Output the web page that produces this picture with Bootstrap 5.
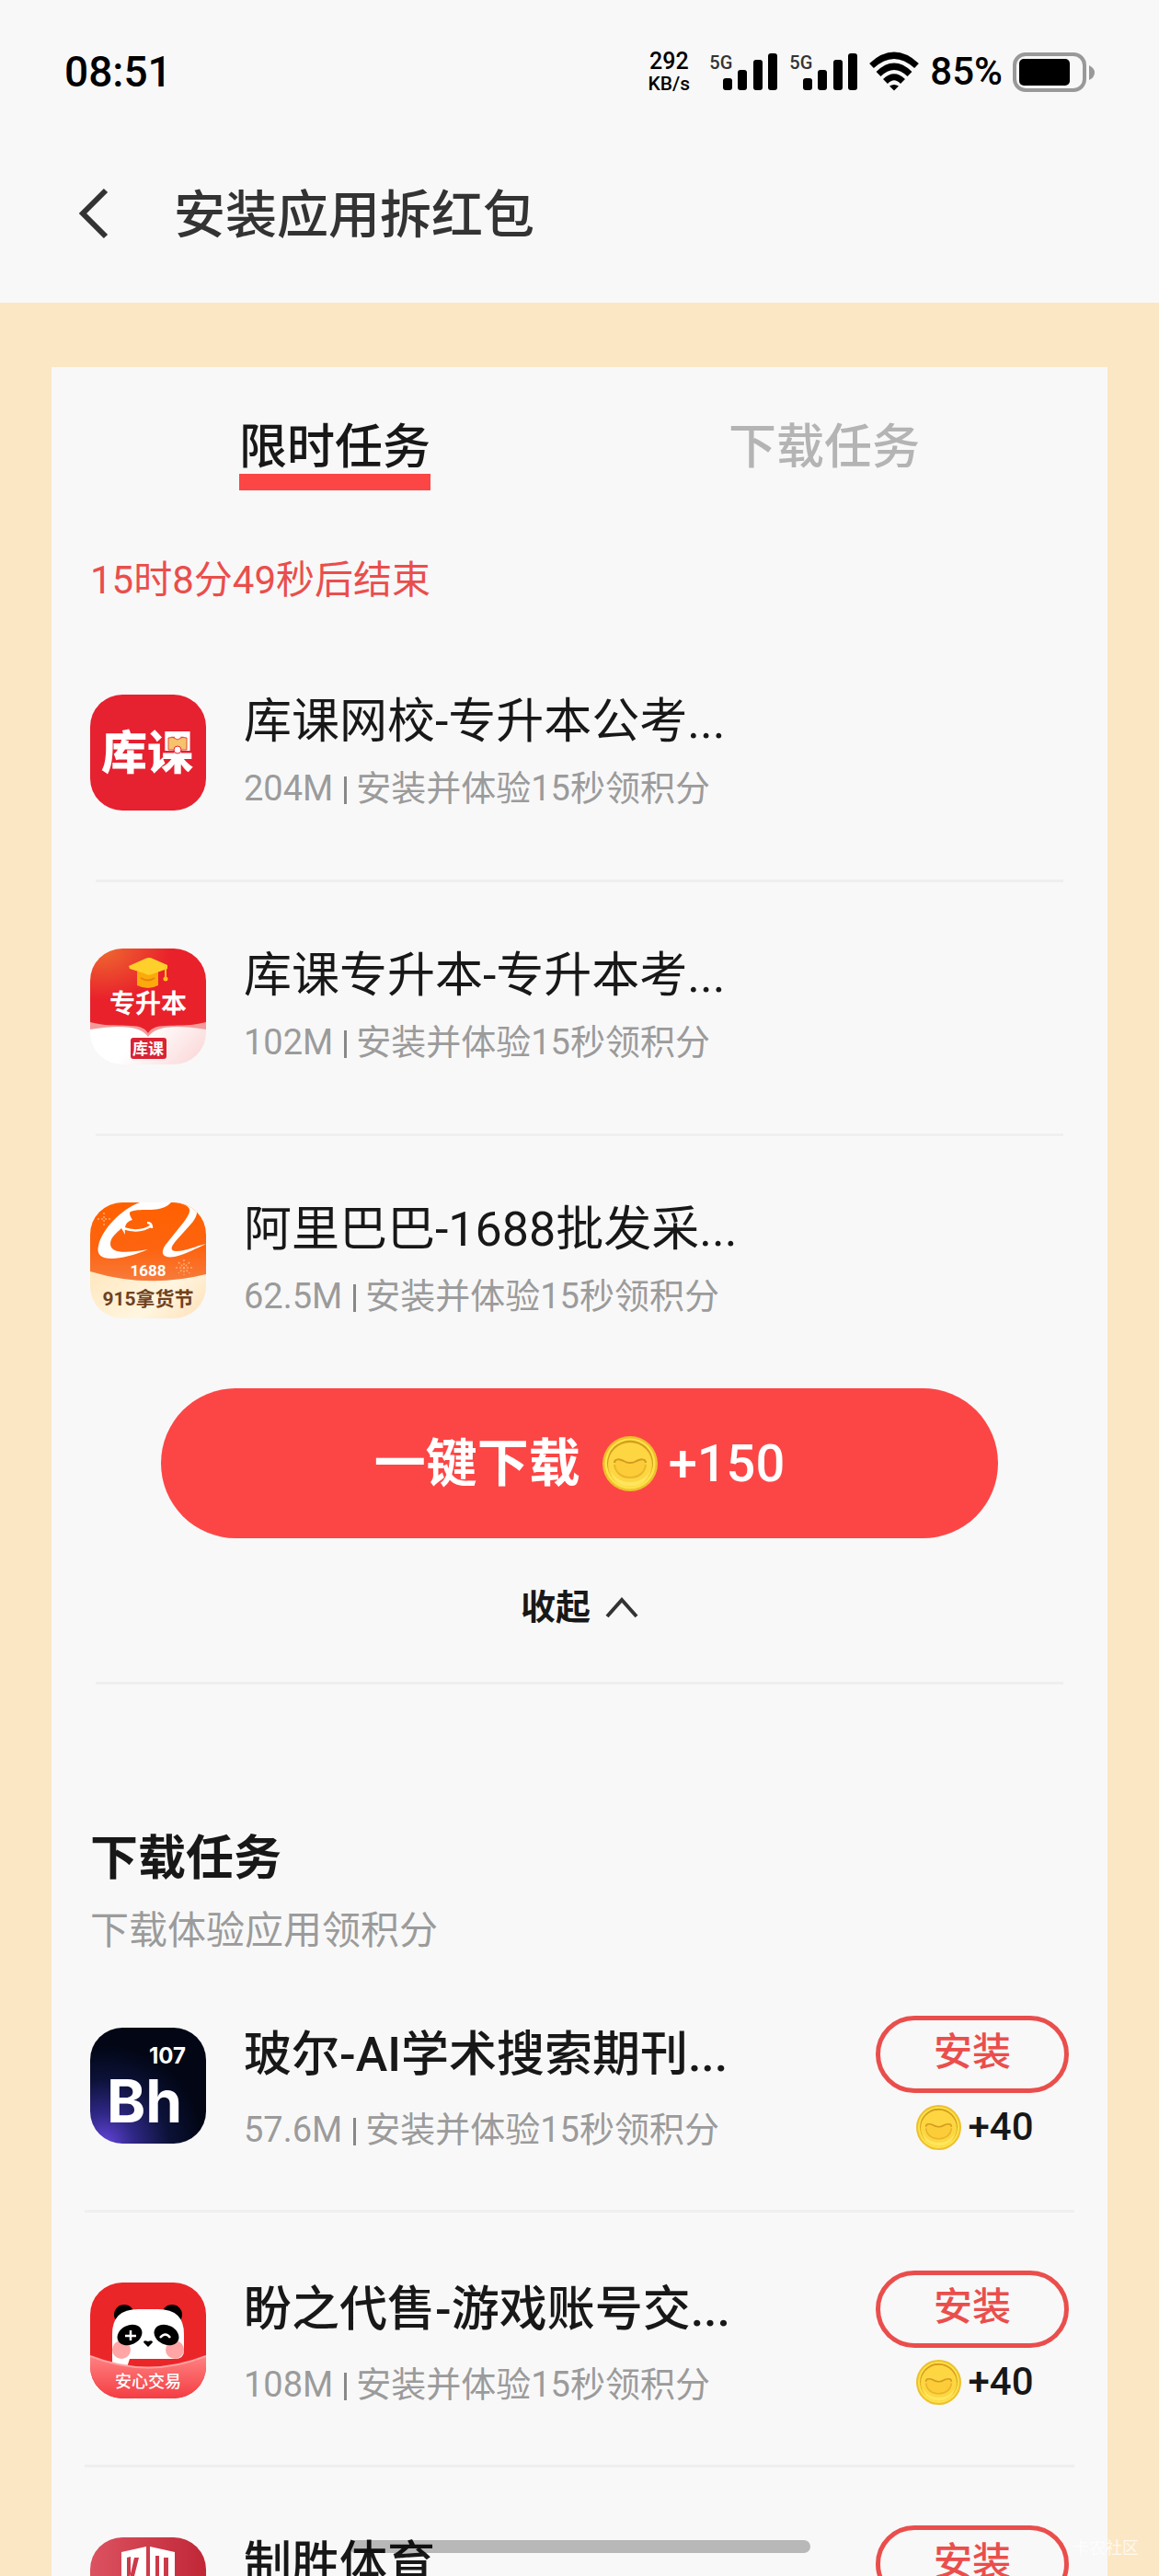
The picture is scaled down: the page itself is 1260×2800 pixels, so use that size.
<!DOCTYPE html>
<html lang="zh-CN">
<head>
<meta charset="utf-8">
<meta name="viewport" content="width=device-width, initial-scale=1">
<title>安装应用拆红包</title>
<link href="https://cdn.jsdelivr.net/npm/bootstrap@5.3.0/dist/css/bootstrap.min.css" rel="stylesheet">
<style>
  :root { --paper: #f8f8f8; --sand: #fce7c4; --ink: #181818; --red: #fc4646; --rose: #ea4e4c; --muted: #9b9b9b; }
  body { background: var(--sand); color: var(--ink); font-family: Roboto, "Noto Sans CJK SC", sans-serif; }
  .screen { height: 100vh; overflow: hidden; }
  svg { display: block; flex: none; overflow: visible; }
  .topbar { background: var(--paper); height: 329px; padding: 34px 70px 0; }
  .status { height: 88px; color: #000; font-weight: 500; }
  .clock { font-size: 46px; line-height: 56px; }
  .netrate { font-size: 25px; line-height: 24px; width: 50px; padding-top: 2px; }
  .netrate small { font-size: 21px; line-height: 24px; }
  .netgen { font-size: 20px; line-height: 20px; color: #333; margin-right: -10px; }
  .percent { font-size: 42px; line-height: 56px; }
  .titlebar { height: 120px; margin-top: 52px; gap: 68px; padding-left: 14px; }
  .backlink { margin-bottom: 4px; }
  .pagetitle { font-size: 56px; line-height: 80px; font-weight: 500; color: #333; }
  .sheet { background: var(--paper); margin: 70px 56px 0; padding: 44px 42px 0; }
  .tabs .tablink { font-size: 52px; line-height: 72px; height: 90px; border: 0; border-bottom: 18px solid transparent; padding: 8px 0 0; background: none; color: #b4b4b4; font-weight: 500; }
  .tabs .tablink.active { color: var(--ink); border-color: var(--red); }
  .countdown { font-size: 42px; line-height: 60px; margin-top: 68px; color: var(--rose); }
  .applist { margin: 94px 0 0; }
  .approw { gap: 41px; }
  .rule { border-top: 3px solid #efefef; margin: 0 6px; }
  .applist .approw { height: 201px; }
  .applist .rule + .approw { height: 273px; padding-top: 72px; }
  .appname { font-size: 52px; line-height: 60px; }
  .appmeta { font-size: 38px; line-height: 50px; color: var(--muted); margin-top: 17px; }
  .metabar { width: 3px; height: 30px; background: #888; margin: 4px 10px 0 12px; }
  .appicon { width: 126px; height: 126px; }
  .cta { width: 910px; height: 163px; border-radius: 82px; background: var(--red); border: 0; color: #fff; font-size: 56px; line-height: 80px; font-weight: 700; margin-top: 1px; }
  .bonus { font-weight: 500; }
  .fold { font-size: 38px; line-height: 60px; font-weight: 700; border: 0; background: none; padding: 0; gap: 16px; color: var(--ink); margin-top: 45px; }
  .fold-rule { margin-top: 51px; }
  .section { margin-top: 154px; }
  .sectiontitle { font-size: 52px; line-height: 72px; font-weight: 700; }
  .sectionnote { font-size: 42px; line-height: 60px; color: var(--muted); margin-top: 12px; }
  .tasklist { margin-top: 62px; }
  .tasklist .approw { height: 211px; }
  .tasklist .appicon { margin-top: 13px; }
  .tasklist .appname { font-weight: 500; margin-top: 13px; }
  .tasklist .appmeta { margin-top: 26px; }
  .tasklist .rule { margin: 0 -6px 63px; }
  .install { width: 210px; height: 84px; border: 5px solid var(--rose); border-radius: 42px; background: none; color: var(--rose); font-size: 42px; line-height: 60px; font-weight: 500; padding: 0 0 4px; }
  .reward { font-size: 42px; line-height: 50px; font-weight: 500; gap: 7px; margin-top: 12px; padding-left: 6px; }
  .homebar { width: 502px; height: 14px; border-radius: 7px; background: rgba(0,0,0,.26); bottom: 25px; left: 50%; transform: translateX(-50%); }
  .stamp { right: 22px; bottom: 17px; font-size: 18px; line-height: 26px; color: rgba(255,255,255,.75); }
</style>
</head>
<body>
<svg width="0" height="0" class="position-absolute" aria-hidden="true">
  <defs>
    <symbol id="coin" viewBox="0 0 60 60">
      <circle cx="30" cy="30" r="30" fill="#eec02c"/>
      <circle cx="30" cy="30" r="27.500" fill="#fde24a"/>
      <circle cx="30" cy="29.500" r="25" fill="#d69d1c"/>
      <circle cx="30" cy="31" r="24" fill="#fdd642"/>
      <path d="M9 38c7 16 35 16 42 0-3 22-39 22-42 0z" fill="#ffe65e"/>
      <path d="M13 29c0-5 6-4 10-2 5 3 9 3 14 0 4-2 10-3 10 2 0 10-7 16-17 16S13 39 13 29z" fill="#fccd38"/>
      <path d="M13 29c0-5 6-4 10-2 5 3 9 3 14 0 4-2 10-3 10 2" fill="none" stroke="#d39c20" stroke-width="2"/>
      <path d="M13 31c1 9 8 14 17 14s16-5 17-14" fill="none" stroke="#e8b52c" stroke-width="2"/>
    </symbol>
    <clipPath id="tile"><rect width="126" height="126" rx="35"/></clipPath>
    <symbol id="bars" viewBox="0 0 60 40">
      <rect x="0" y="27" width="10" height="13" rx="3"/><rect x="16" y="18" width="10" height="22" rx="3"/><rect x="33" y="7" width="10" height="33" rx="3"/><rect x="49" y="0" width="10" height="40" rx="3"/>
    </symbol>
  </defs>
</svg>
<div class="screen position-relative">
  <header class="topbar">
    <div class="status d-flex justify-content-between align-items-start">
      <div class="clock pt-3">08:51</div>
      <div class="d-flex align-items-center pt-3">
        <div class="netrate d-flex flex-column text-center"><span>292</span><small>KB/s</small></div>
        <div class="d-flex align-items-start" style="margin-left:19px"><span class="netgen">5G</span><svg width="60" height="40"><use href="#bars"/></svg></div>
        <div class="d-flex align-items-start" style="margin-left:12px"><span class="netgen">5G</span><svg width="60" height="40"><use href="#bars"/></svg></div>
        <svg width="54" height="44" viewBox="0 0 54 44" style="margin-left:12px" fill="none" stroke="#000" stroke-width="7"><path d="M2.500 15.500Q27-7 51.500 15.500M10 24.500Q27 8 44 24.500M17.500 32.500Q27 23 36.500 32.500"/><path d="M27 42.500l-5-5q5-3 10 0z" fill="#000" stroke="none"/></svg>
        <span class="percent" style="margin-left:12px">85%</span>
        <svg width="89" height="44" viewBox="0 0 89 44" style="margin-left:11px"><rect x="2" y="3" width="76" height="39" rx="12" fill="none" stroke="#999" stroke-width="4"/><rect x="7" y="8" width="55" height="29" rx="5"/><path d="M83 15q6 3 6 8t-6 8z" fill="#999"/></svg>
      </div>
    </div>
    <div class="titlebar d-flex align-items-center">
      <a href="#" class="backlink" aria-label="返回"><svg width="37" height="54" viewBox="0 0 37 54" fill="none" stroke="#333" stroke-width="6"><path d="M31 2L6 27l25 25"/></svg></a>
      <h1 class="pagetitle m-0">安装应用拆红包</h1>
    </div>
  </header>

  <main class="sheet">
    <nav class="tabs row g-0">
      <div class="col-6 text-center"><button class="tablink active" type="button">限时任务</button></div>
      <div class="col-6 text-center"><button class="tablink" type="button">下载任务</button></div>
    </nav>
    <div class="countdown">15时8分49秒后结束</div>

    <div class="applist">
      <div class="approw d-flex align-items-start">
        <svg class="appicon" viewBox="0 0 126 126"><rect width="126" height="126" rx="35" fill="#e62130"/><text x="12" y="81" font-size="50" font-weight="900" fill="#fff">库课</text><path d="M85 47q5-2 10 2 5-4 10-2v13q-5-1-10 2-5-3-10-2z" fill="#f6c36c" stroke="#e64a38"/><circle cx="95" cy="60" r="4" fill="#fff" stroke="#e62130"/></svg>
        <div><div class="appname">库课网校-专升本公考...</div><div class="appmeta d-flex align-items-center">204M<span class="metabar"></span>安装并体验15秒领积分</div></div>
      </div>
      <div class="rule"></div>
      <div class="approw d-flex align-items-start">
        <svg class="appicon" viewBox="0 0 126 126"><defs><radialGradient id="ember" cx=".1" cy="0" r=".6"><stop offset="0" stop-color="#ee6a30"/><stop offset="1" stop-color="#e9212b"/></radialGradient><linearGradient id="page" x1="0" y1="0" x2="1" y2="1"><stop offset=".6" stop-color="#fff"/><stop offset="1" stop-color="#fbd3d3"/></linearGradient></defs><g clip-path="url(#tile)"><rect width="126" height="126" fill="url(#page)"/><path d="M0 80H126v8q-52-9-63 8-11-17-63-8z" fill="#f49a9a"/><path d="M0 0H126V80c-30 8-55-2-63 12C55 78 30 88 0 80z" fill="url(#ember)"/><path d="M51 25h23v15q-11 6-23 0z" fill="#fba90d"/><path d="M42 19L60 11q4-2 8 0l16 7v4L67 28q-4 2-8-1L43 22z" fill="#ffd02b"/><path d="M82 19v12" stroke="#ffc21c" stroke-width="2"/><circle cx="82" cy="33" r="2.500" fill="#ffc21c"/><path d="M55 32q8 5 15 0" fill="none" stroke="#e98408" stroke-width="2"/><rect x="44" y="97" width="39" height="23" rx="3" fill="#d92334"/></g><text x="63" y="70" text-anchor="middle" font-size="28" font-weight="700" fill="#fff">专升本</text><text x="63" y="115" text-anchor="middle" font-size="17" font-weight="700" fill="#fff">库课</text></svg>
        <div><div class="appname">库课专升本-专升本考...</div><div class="appmeta d-flex align-items-center">102M<span class="metabar"></span>安装并体验15秒领积分</div></div>
      </div>
      <div class="rule"></div>
      <div class="approw d-flex align-items-start">
        <svg class="appicon" viewBox="0 0 126 126"><defs><linearGradient id="orange" x1="0" y1="0" x2="0" y2="1"><stop offset="0" stop-color="#ff6100"/><stop offset=".6" stop-color="#fd6410"/><stop offset="1" stop-color="#f77b3c"/></linearGradient><linearGradient id="cream" x1="0" y1="0" x2="1" y2="1"><stop offset="0" stop-color="#ffdca6"/><stop offset=".7" stop-color="#fff6e0"/><stop offset="1" stop-color="#ffe0b8"/></linearGradient></defs><g clip-path="url(#tile)"><rect width="126" height="126" fill="url(#cream)"/><path d="M0 0H126V78Q63 94 0 75z" fill="url(#orange)"/><path d="M54 0C34 7 13 29 9 47c-5 19 23 17 54 4-23 4-41 5-41-6 0-7 7-12 12-17l4 7c-1-10 1-14 8-16-3-5-4-8-2-9C56 5 76 13 88 0z" fill="#fff"/><path d="M94 0c20 4 15 11 8 21L82 46c-7 10-2 15 10 13 13-3 23-9 34-14V52H126V45c-10 2-22 8-32 8-8 0-6-5-1-11l17-19c9-10 8-19-3-23z" fill="#fff"/><path d="M36 28q18 6 31-3m-5-3q5 0 5 6" fill="none" stroke="#fff" stroke-width="2.500"/><path d="M102 62v17m-9-8h18m-15-6l12 12m0-12l-12 12M15 11v14m-7-7h14" stroke="#ffac73" stroke-width="1.500" stroke-dasharray="2 2"/></g><text x="63" y="80" text-anchor="middle" font-size="17" font-weight="700" fill="#fff">1688</text><text x="63" y="112" text-anchor="middle" font-size="21" font-weight="700" fill="#70411e">915拿货节</text></svg>
        <div><div class="appname">阿里巴巴-1688批发采...</div><div class="appmeta d-flex align-items-center">62.5M<span class="metabar"></span>安装并体验15秒领积分</div></div>
      </div>
    </div>

    <div class="d-flex flex-column align-items-center">
      <button class="cta d-flex justify-content-center align-items-center" type="button">一键下载<svg width="60" height="60" class="ms-4 me-2"><use href="#coin"/></svg><span class="bonus ps-1">+150</span></button>
      <button class="fold d-flex align-items-center" type="button">收起<svg width="36" height="24" viewBox="0 0 36 24" fill="none" stroke="#333" stroke-width="4"><path d="M2 22L18 4l16 18"/></svg></button>
    </div>
    <div class="rule fold-rule"></div>

    <section class="section">
      <h2 class="sectiontitle m-0">下载任务</h2>
      <div class="sectionnote">下载体验应用领积分</div>
    </section>

    <div class="tasklist">
      <div class="approw d-flex align-items-start">
        <svg class="appicon" viewBox="0 0 126 126"><defs><radialGradient id="night" cx=".12" cy="1" r=".85"><stop offset="0" stop-color="#6545dc"/><stop offset=".3" stop-color="#302887"/><stop offset=".65" stop-color="#0c1238"/><stop offset="1" stop-color="#020615"/></radialGradient></defs><rect width="126" height="126" rx="35" fill="url(#night)"/><g font-family="Inter, Roboto, sans-serif" font-weight="700" fill="#fff"><text x="104" y="39" text-anchor="end" font-size="24">107</text><text x="18" y="103" font-size="64">Bh</text></g></svg>
        <div class="flex-grow-1"><div class="appname">玻尔-AI学术搜索期刊...</div><div class="appmeta d-flex align-items-center">57.6M<span class="metabar"></span>安装并体验15秒领积分</div></div>
        <div class="d-flex flex-column align-items-center"><button class="install" type="button">安装</button><div class="reward d-flex align-items-center"><svg width="49" height="49"><use href="#coin"/></svg>+40</div></div>
      </div>
      <div class="rule"></div>
      <div class="approw d-flex align-items-start">
        <svg class="appicon" viewBox="0 0 126 126"><defs><linearGradient id="blush" x1="0" y1="0" x2="0" y2="1"><stop offset="0" stop-color="#ff8181"/><stop offset="1" stop-color="#f43d43"/></linearGradient></defs><g clip-path="url(#tile)"><rect width="126" height="126" fill="#ea2629"/><circle cx="37" cy="35" r="11"/><circle cx="89" cy="35" r="11"/><path d="M24 92V56q0-27 28-27h22q28 0 28 27v18q0 9-10 9H43l-3 9z" fill="#fff"/><circle cx="34" cy="73" r="10" fill="#ffa5a5"/><circle cx="92" cy="73" r="10" fill="#ffa5a5"/><ellipse cx="43" cy="57" rx="14" ry="10.500" transform="rotate(-25 43 57)"/><ellipse cx="83" cy="57" rx="14" ry="10.500" transform="rotate(25 83 57)"/><path d="M44 52v11m-6-5h12M76 60q6-7 11 0" fill="none" stroke="#fff" stroke-width="2.500"/><path d="M58 65q0-3 5-1 5-2 5 1l-5 5z"/><path d="M0 80Q63 105 126 80V126H0z" fill="url(#blush)"/><path d="M0 80Q63 105 126 80" fill="none" stroke="#ffa2a2" stroke-width="2"/></g><text x="63" y="114" text-anchor="middle" font-size="18" font-weight="500" fill="#fff">安心交易</text></svg>
        <div class="flex-grow-1"><div class="appname">盼之代售-游戏账号交...</div><div class="appmeta d-flex align-items-center">108M<span class="metabar"></span>安装并体验15秒领积分</div></div>
        <div class="d-flex flex-column align-items-center"><button class="install" type="button">安装</button><div class="reward d-flex align-items-center"><svg width="49" height="49"><use href="#coin"/></svg>+40</div></div>
      </div>
      <div class="rule"></div>
      <div class="approw d-flex align-items-start">
        <svg class="appicon" viewBox="0 0 126 126"><defs><linearGradient id="crimson" x1="0" y1="0" x2="1" y2="0"><stop offset="0" stop-color="#dc5260"/><stop offset="1" stop-color="#c02737"/></linearGradient></defs><rect width="126" height="126" rx="35" fill="url(#crimson)"/><path d="M34 16l27-6v75L34 68zM65 10l27 6v52L65 85z" fill="#fff"/><path d="M40 22v22l4-1V21zm8 0h5L42 66h-4zM71 20h4v60h-4zm9 2h5v50h-5z" fill="#cc3949"/></svg>
        <div class="flex-grow-1"><div class="appname">制胜体育</div></div>
        <div class="d-flex flex-column align-items-center"><button class="install" type="button">安装</button></div>
      </div>
    </div>
  </main>
  <div class="stamp position-absolute">卡农社区</div>
  <div class="homebar position-absolute"></div>
</div>
<script src="https://cdn.jsdelivr.net/npm/bootstrap@5.3.0/dist/js/bootstrap.bundle.min.js"></script>
</body>
</html>
